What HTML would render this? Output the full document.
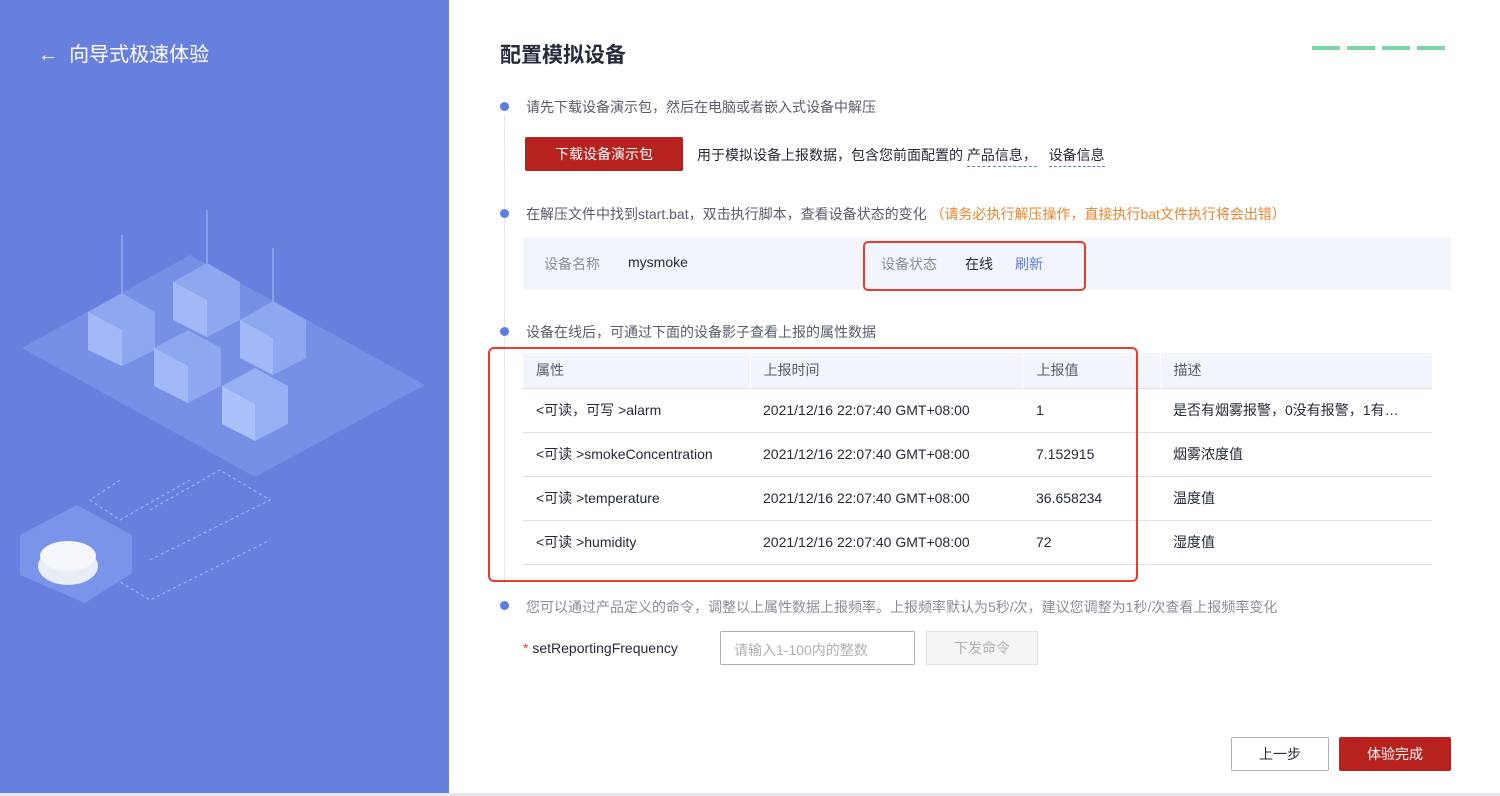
<!DOCTYPE html>
<html><head><meta charset="utf-8"><style>
*{margin:0;padding:0;box-sizing:border-box}
body{width:1500px;height:796px;overflow:hidden;font-family:"Liberation Sans","Noto Sans CJK SC",sans-serif;background:#fff;position:relative;color:#252b3a}
.left{position:absolute;left:0;top:0;width:449px;height:796px;background:#6780dd}
.abs{position:absolute}
.t{font-size:14px;white-space:nowrap}
.dot{position:absolute;left:500px;width:9px;height:9px;border-radius:50%;background:#5e7ce0}
.g{color:#575d6c}
table{border-collapse:collapse}
</style></head><body>
<div class="left">
<div class="abs" style="left:38px;top:38px;color:#fff;font-size:20px">←&nbsp; 向导式极速体验</div>
<svg class="abs" style="left:0;top:180px" width="449" height="450" viewBox="0 0 449 450">
<polygon points="22,168 190,75 425,205 255,297" fill="#7a95e6" opacity=".75"/>
<g stroke="#a8bdf5" stroke-width="1" fill="none">
<line x1="122" y1="55" x2="122" y2="130"/><line x1="207" y1="30" x2="207" y2="95"/><line x1="273" y1="68" x2="273" y2="135"/>
<polyline points="120,300 90,320 120,340 190,300" stroke-dasharray="3 3"/>
<polyline points="150,330 220,290 270,320 150,380" stroke-dasharray="3 3"/>
<polyline points="100,390 150,420 270,360" stroke-dasharray="3 3"/>
</g>
<g>
<polygon points="88,132 122,113 155,132 155,170 122,186 88,170" fill="#8ea8f0"/>
<polygon points="88,132 122,150 122,186 88,170" fill="#a2b8f7"/>
<polygon points="173,102 207,83 240,102 240,140 207,157 173,140" fill="#8ea8f0"/>
<polygon points="173,102 207,120 207,157 173,140" fill="#a2b8f7"/>
<polygon points="240,140 273,121 306,140 306,178 273,195 240,178" fill="#8ea8f0"/>
<polygon points="240,140 273,158 273,195 240,178" fill="#a2b8f7"/>
<polygon points="154,168 188,150 221,168 221,206 188,223 154,206" fill="#8ea8f0"/>
<polygon points="154,168 188,186 188,223 154,206" fill="#a2b8f7"/>
<polygon points="222,206 255,188 288,206 288,244 255,261 222,244" fill="#95b0f3"/>
<polygon points="222,206 255,224 255,261 222,244" fill="#a9c0f8"/>
</g>
<polygon points="20,355 77,325 132,355 132,393 85,423 20,395" fill="#7d98ea" opacity=".85"/>
<ellipse cx="68" cy="386" rx="30" ry="19" fill="#e8edf8"/>
<ellipse cx="68" cy="376" rx="28" ry="15" fill="#f4f6fc"/>
</svg>
</div>
<div class="abs" style="left:500px;top:39px;font-size:21px;font-weight:bold;color:#252b3a">配置模拟设备</div>
<div class="abs" style="left:1312px;top:46px;width:134px;height:4px;background:repeating-linear-gradient(90deg,#7ad6a8 0 28px,transparent 28px 35px)"></div>
<div class="abs" style="left:504px;top:115px;width:1px;height:470px;background:#e4e6ec"></div>
<div class="dot" style="top:102px"></div>
<div class="abs t g" style="left:526px;top:97px">请先下载设备演示包，然后在电脑或者嵌入式设备中解压</div>
<div class="abs t" style="left:525px;top:137px;width:158px;height:34px;background:#b7221f;color:#fff;text-align:center;line-height:34px;border-radius:2px">下载设备演示包</div>
<div class="abs t" style="left:697px;top:145px">用于模拟设备上报数据，包含您前面配置的 <span style="border-bottom:1px dashed #5e7ce0;padding-bottom:3px">产品信息，</span>&nbsp;&nbsp;&nbsp;<span style="border-bottom:1px dashed #5e7ce0;padding-bottom:3px">设备信息</span></div>
<div class="dot" style="top:209px"></div>
<div class="abs t" style="left:526px;top:204px;color:#575d6c">在解压文件中找到start.bat，双击执行脚本，查看设备状态的变化 <span style="color:#e8862d">（请务必执行解压操作，直接执行bat文件执行将会出错）</span></div>
<div class="abs" style="left:523px;top:237px;width:928px;height:53px;background:#f3f5fc"></div>
<div class="abs t g" style="left:544px;top:254px;color:#8a8e99">设备名称</div>
<div class="abs t" style="left:628px;top:254px">mysmoke</div>
<div class="abs t" style="left:881px;top:254px;color:#8a8e99">设备状态</div>
<div class="abs t" style="left:965px;top:254px">在线</div>
<div class="abs t" style="left:1015px;top:254px;color:#5e7ce0">刷新</div>
<div class="abs" style="left:863px;top:241px;width:223px;height:50px;border:2px solid #e53e30;border-radius:5px"></div>
<div class="dot" style="top:327px"></div>
<div class="abs t" style="left:526px;top:322px;color:#575d6c">设备在线后，可通过下面的设备影子查看上报的属性数据</div>
<table class="abs t" style="left:523px;top:353px;width:909px">
<tr style="background:#f3f5fc;height:35px;color:#575d6c"><td style="width:227px;padding-left:13px;border-right:1px solid #fff">属性</td><td style="width:273px;padding-left:13px;border-right:1px solid #fff">上报时间</td><td style="width:137px;padding-left:13px;border-right:1px solid #fff">上报值</td><td style="padding-left:13px">描述</td></tr>
<tr style="height:44px;border-top:1px solid #dfe1e6"><td style="padding-left:13px">&lt;可读，可写 &gt;alarm</td><td style="padding-left:13px">2021/12/16 22:07:40 GMT+08:00</td><td style="padding-left:13px">1</td><td style="padding-left:13px">是否有烟雾报警，0没有报警，1有…</td></tr>
<tr style="height:44px;border-top:1px solid #dfe1e6"><td style="padding-left:13px">&lt;可读 &gt;smokeConcentration</td><td style="padding-left:13px">2021/12/16 22:07:40 GMT+08:00</td><td style="padding-left:13px">7.152915</td><td style="padding-left:13px">烟雾浓度值</td></tr>
<tr style="height:44px;border-top:1px solid #dfe1e6"><td style="padding-left:13px">&lt;可读 &gt;temperature</td><td style="padding-left:13px">2021/12/16 22:07:40 GMT+08:00</td><td style="padding-left:13px">36.658234</td><td style="padding-left:13px">温度值</td></tr>
<tr style="height:44px;border-top:1px solid #dfe1e6;border-bottom:1px solid #dfe1e6"><td style="padding-left:13px">&lt;可读 &gt;humidity</td><td style="padding-left:13px">2021/12/16 22:07:40 GMT+08:00</td><td style="padding-left:13px">72</td><td style="padding-left:13px">湿度值</td></tr>
</table>
<div class="abs" style="left:488px;top:347px;width:650px;height:235px;border:2px solid #e53e30;border-radius:6px"></div>
<div class="dot" style="top:601px"></div>
<div class="abs t" style="left:526px;top:597px;color:#8a8e99">您可以通过产品定义的命令，调整以上属性数据上报频率。上报频率默认为5秒/次，建议您调整为1秒/次查看上报频率变化</div>
<div class="abs t" style="left:523px;top:640px"><span style="color:#e53e30">*</span> setReportingFrequency</div>
<div class="abs t" style="left:720px;top:631px;width:195px;height:34px;border:1px solid #adb0b8;border-radius:2px;color:#adb0b8;padding:8px 13px">请输入1-100内的整数</div>
<div class="abs t" style="left:926px;top:631px;width:112px;height:34px;border:1px solid #dfe1e6;background:#f5f5f6;color:#adb0b8;text-align:center;line-height:32px">下发命令</div>
<div class="abs t" style="left:1231px;top:737px;width:98px;height:34px;border:1px solid #adb0b8;text-align:center;line-height:32px;border-radius:2px">上一步</div>
<div class="abs t" style="left:1339px;top:737px;width:112px;height:34px;background:#b7221f;color:#fff;text-align:center;line-height:34px;border-radius:2px">体验完成</div>
<div class="abs" style="left:0;top:793px;width:1500px;height:3px;background:#e4e6ec"></div>
</body></html>
